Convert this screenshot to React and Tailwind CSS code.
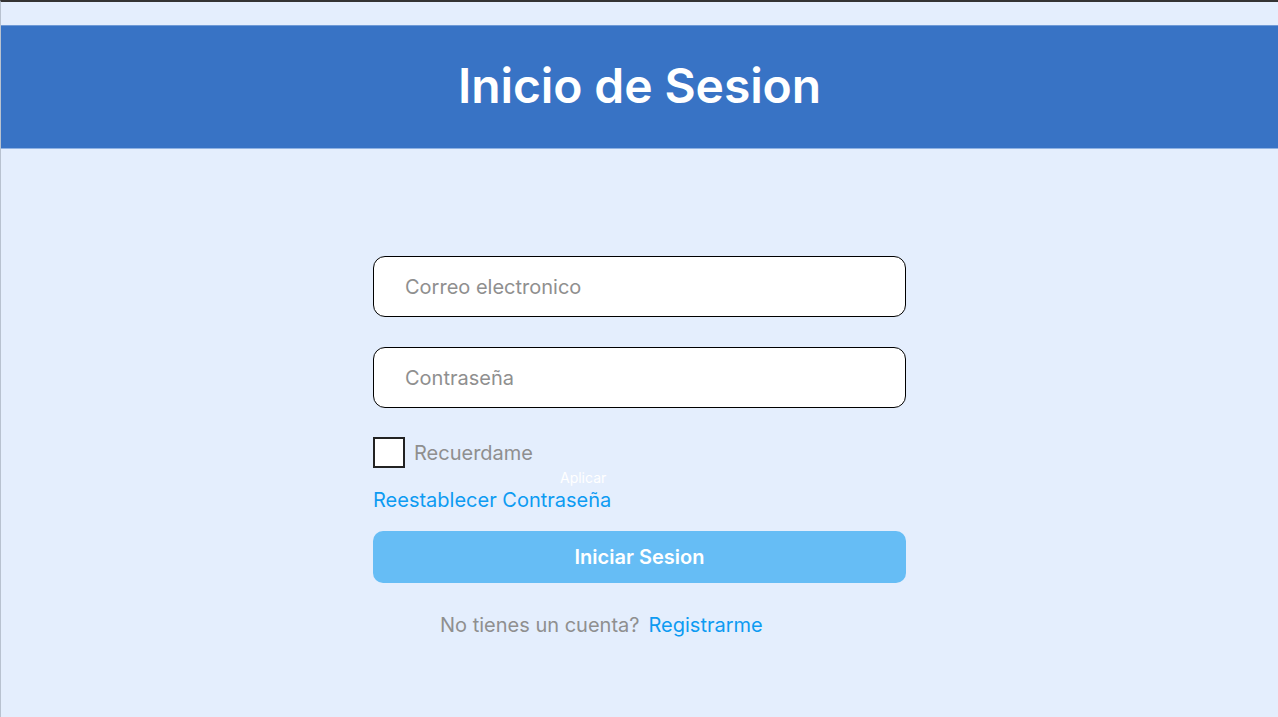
export default function App() {
  return (
    <div
      className="w-[1278px] h-[717px] bg-[#e4eefd] border-t-2 border-t-[#333] border-l border-l-[#b8c2d0] flex flex-col overflow-hidden"
      style={{ fontFamily: "Inter, 'Noto Sans', sans-serif" }}
    >
      <div className="h-[23px]" />
      <div className="h-[124px] bg-[#3873c5] border-t border-t-[#6f9ad6] border-b border-b-[#8fb2e3] flex items-center justify-center pb-[3px]">
        <h1 className="text-[48px] font-semibold text-white leading-none tracking-[-0.1px]">Inicio de Sesion</h1>
      </div>
      <div className="flex justify-center pt-[107px]">
        <div className="w-[533px] flex flex-col">
          <div className="h-[61px] bg-white border border-black rounded-[12px] flex items-center pl-[31px]">
            <span className="text-[20px] text-[#8f8f8f]">Correo electronico</span>
          </div>
          <div className="h-[61px] mt-[30px] bg-white border border-black rounded-[12px] flex items-center pl-[31px]">
            <span className="text-[20px] text-[#8f8f8f]">Contraseña</span>
          </div>
          <div className="flex items-center mt-[29px] gap-[9px]">
            <div className="w-[32px] h-[31px] bg-white border-2 border-[#222]" />
            <span className="text-[20px] text-[#8f8f8f]">Recuerdame</span>
          </div>
          <div className="relative mt-[18px] h-[28px] flex items-center">
            <span className="text-[20px] text-[#0d9bf2]">Reestablecer Contraseña</span>
            <span className="absolute left-[187px] top-[-19px] text-[14px] text-white">Aplicar</span>
          </div>
          <div className="mt-[17px] h-[52px] bg-[#66bdf5] rounded-[10px] flex items-center justify-center">
            <span className="text-[20px] font-semibold text-white">Iniciar Sesion</span>
          </div>
          <div className="mt-[27px] flex pl-[67px] gap-[9px] text-[20px]">
            <span className="text-[#8f8f8f]">No tienes un cuenta?</span>
            <span className="text-[#0d9bf2]">Registrarme</span>
          </div>
        </div>
      </div>
    </div>
  );
}
